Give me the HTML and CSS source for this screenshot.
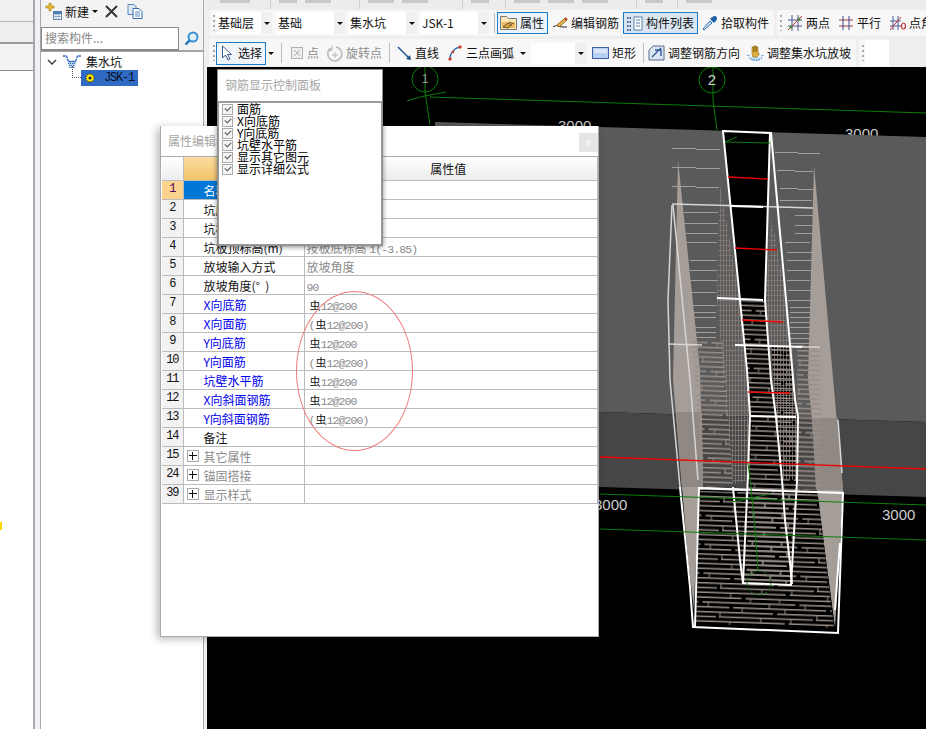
FILE: index.html
```html
<!DOCTYPE html>
<html lang="zh">
<head>
<meta charset="utf-8">
<title>集水坑</title>
<link rel="stylesheet" href="styles.css">
</head>
<body>
<div class="app">
  <aside class="leftcol">
    <div class="lc-top"></div>
    <div class="lc-btn"></div>
    <div class="lc-mid"></div>
    <div class="lc-list"></div>
  </aside>
  <div class="gutter"></div>
  <section class="tree">
    <div class="tree-bar">
      <svg class="ic" width="17" height="17" viewBox="0 0 17 17"><path d="M4 0h2v3h3v2H6v3H4V5H1V3h3z" fill="#f2c230" stroke="#9a7a10" stroke-width=".6"/><rect x="8.500" y="8.500" width="8" height="8" fill="#fff" stroke="#5f7fa8"/><path d="M8.500 11h8M8.500 13.500h8M11 11v5.500M13.700 11v5.500" stroke="#7f9cc0" stroke-width=".8"/><rect x="8.500" y="8.500" width="8" height="2.500" fill="#4f7fb8"/></svg>
      <span class="lbl">新建</span>
      <span class="arrow-sm"></span>
      <svg class="ic x-ic" width="13" height="13" viewBox="0 0 13 13"><path d="M1 1l11 11M12 1L1 12" stroke="#333" stroke-width="2"/></svg>
      <svg class="ic copy-ic" width="16" height="15" viewBox="0 0 16 15"><path d="M1 .5h6l2 2v8H1z" fill="#dfe9f5" stroke="#5d86b8"/><path d="M6 4.500h6l3 3v7H6z" fill="#fff" stroke="#2f6cb0"/><path d="M8 8h5M8 10h5M8 12h5" stroke="#2f6cb0" stroke-width=".8"/></svg>
    </div>
    <div class="search">
      <span class="search-in">搜索构件...</span>
      <span class="search-btn"><svg width="15" height="15" viewBox="0 0 15 15"><circle cx="9" cy="6" r="4.500" fill="#dff0fb" stroke="#3b8fd0" stroke-width="2"/><path d="M5.500 9.500L1.500 13.500" stroke="#2f7fc0" stroke-width="2.500"/></svg></span>
    </div>
    <div class="tree-body">
      <div class="node">
        <svg class="chev" width="10" height="6" viewBox="0 0 10 6"><path d="M1 1l4 4 4-4" fill="none" stroke="#444" stroke-width="1.500"/></svg>
        <svg class="pit-ic" width="18" height="14" viewBox="0 0 18 14"><path d="M4 6h10l-2.500 7h-5z" fill="#bcd4ee"/><path d="M0 1h3.500l2 5.500h7l2-5.500H18" fill="none" stroke="#1f5fb8" stroke-width="1.300" stroke-dasharray="2.500 .8"/><path d="M5 8.500h8M6 10.500h6M6.500 12.500h5" stroke="#1f5fb8" stroke-dasharray="1 1"/></svg>
        <span class="lbl">集水坑</span>
      </div>
      <div class="link"></div>
      <div class="node-sel">
        <svg width="10" height="10" viewBox="0 0 10 10"><circle cx="5" cy="5" r="4" fill="#ffec00" stroke="#111" stroke-dasharray="1.200 1"/><circle cx="5" cy="5" r="1.500" fill="#222"/></svg>
        <span>JSK-1</span>
      </div>
    </div>
  </section>
  <div class="gutter2"></div>

  <main class="main">
    <div class="strip">
      <span class="stub s1"></span><span class="tick t1"></span><span class="stub s2"></span><span class="stub s3"></span><span class="tick t2"></span><span class="stub s3"></span><span class="stub s3"></span><span class="tick t3"></span><span class="stub s2"></span><span class="tick t4"></span><span class="stub s3"></span><span class="stub s3 m"></span><span class="stub s3 m"></span><span class="tick t5"></span><span class="stub s2"></span><span class="tick t6"></span><span class="stub s3"></span>
    </div>

    <div class="row row1">
      <div class="seg seg1">
        <span class="grip"></span>
        <span class="sel ml1 w56"><span class="sel-text">基础层</span><span class="sel-btn"></span></span>
        <span class="sel ml4 w69"><span class="sel-text">基础</span><span class="sel-btn"></span></span>
        <span class="sel ml3 w69"><span class="sel-text">集水坑</span><span class="sel-btn"></span></span>
        <span class="sel ml3 w69"><span class="sel-text">JSK-1</span><span class="sel-btn"></span></span>
        <span class="sep ml5"></span>
        <span class="tool on ml2">
          <svg width="17" height="16" viewBox="0 0 17 16"><path d="M.5 1.500h6l2 2h8v11H.5z" fill="#fbe6b8" stroke="#777"/><path d="M2 7h13v6H2z" fill="#f4b860"/><path d="M3 12l5-4 4 2-4 3zM9 7l5 2" stroke="#6b5a30" fill="#d8a040"/></svg>
          <span>属性</span>
        </span>
        <span class="tool ml2">
          <svg width="16" height="14" viewBox="0 0 16 14"><path d="M1 11c2-1 3-2 5-1s5 1 9 1" fill="none" stroke="#222"/><path d="M5 9l8-7 2 2-8 7z" fill="#e8b440" stroke="#6b4a10" stroke-width=".7"/><path d="M13 2l2 2" stroke="#c03020" stroke-width="2"/></svg>
          <span>编辑钢筋</span>
        </span>
        <span class="tool on dark ml2">
          <svg width="17" height="15" viewBox="0 0 17 15"><g fill="none" stroke="#5b7fa8"><rect x="8" y="1" width="8" height="13" fill="#fff"/><path d="M10 4h4M10 7h4M10 10h4"/></g><path d="M1 2h4M1 6h4M1 10h4M1 14h4" stroke="#4a6a90" stroke-width="2" stroke-dasharray="1.500 1"/></svg>
          <span>构件列表</span>
        </span>
        <span class="tool ml2">
          <svg width="16" height="16" viewBox="0 0 16 16"><path d="M2 15l-1-1 7-8 2 2z" fill="#cfe4f5" stroke="#2f6fb0"/><path d="M8 4l4 4 2-2-4-4z" fill="#1f5fa8"/><circle cx="12.500" cy="3.500" r="2.500" fill="#1f5fa8"/></svg>
          <span>拾取构件</span>
        </span>
      </div>
      <div class="seg seg2">
        <span class="grip"></span>
        <span class="tool ml3">
          <svg width="16" height="16" viewBox="0 0 16 16"><path d="M0 5h14M0 11h14M4 0v16M10 0v16" stroke="#4a5a90" fill="none" transform="translate(1 0)"/><path d="M1 15L15 1" stroke="#c03030"/><circle cx="4" cy="12" r="1.600" fill="#4a8a30"/><circle cx="12" cy="4" r="1.600" fill="#4a8a30"/></svg>
          <span>两点</span>
        </span>
        <span class="tool ml6">
          <svg width="16" height="16" viewBox="0 0 16 16"><path d="M1 5h14M1 11h14" stroke="#a03838"/><path d="M5 1v14M11 1v14" stroke="#3a4a90"/></svg>
          <span>平行</span>
        </span>
        <span class="tool ml7">
          <svg width="16" height="16" viewBox="0 0 16 16"><path d="M0 6h11M0 11h11M3 1v14M8 1v14" stroke="#4a5a90" fill="none"/><path d="M0 15L11 2" stroke="#c03030"/><path d="M13.500 8a2 3 0 1 0 .01 0z" fill="none" stroke="#c03030" stroke-width="1.200"/></svg>
          <span>点角</span>
        </span>
      </div>
    </div>

    <div class="row row2">
      <div class="seg seg3">
        <span class="grip"></span>
        <span class="tool on pale ml1">
          <svg width="16" height="16" viewBox="0 0 16 16"><path d="M3.500 1v12l3-3 2.500 5 2-1-2.500-4.500h4z" fill="#fff" stroke="#3a5a80"/></svg>
          <span>选择</span>
        </span>
        <span class="arrow"></span>
        <span class="sep ml5"></span>
        <span class="tool ml6 dim">
          <svg width="14" height="14" viewBox="0 0 14 14"><rect x="1.500" y="1.500" width="11" height="11" fill="#eee" stroke="#b0b0b0"/><path d="M4 4l6 6M10 4l-6 6" stroke="#b0b0b0"/></svg>
          <span>点</span>
        </span>
        <span class="tool ml5 dim">
          <svg width="17" height="17" viewBox="0 0 17 17"><path d="M5 3a7 7 0 1 0 5-1" fill="none" stroke="#b8b8b8" stroke-width="1.500"/><path d="M6 .5v5H2" fill="none" stroke="#b8b8b8"/><path d="M6 10h6M9 7v6" stroke="#b8b8b8"/></svg>
          <span>旋转点</span>
        </span>
        <span class="sep ml7"></span>
        <span class="tool ml5">
          <svg width="15" height="15" viewBox="0 0 15 15"><path d="M1 1l12 12" stroke="#1f4f90" stroke-width="1.400"/><path d="M14 14l-5-1 4-4z" fill="#1f4f90"/></svg>
          <span>直线</span>
        </span>
        <span class="tool ml6">
          <svg width="16" height="16" viewBox="0 0 16 16"><path d="M3 14C3 8 7 3 13 2" fill="none" stroke="#2f6fb0" stroke-width="1.500"/><circle cx="3" cy="14" r="1.700" fill="#d04030"/><circle cx="13" cy="2" r="1.700" fill="#d04030"/><circle cx="6" cy="7" r="1.300" fill="#d04030"/></svg>
          <span>三点画弧</span>
        </span>
        <span class="arrow ml4"></span>
        <span class="sel ml3 w55 short"><span class="sel-text"></span><span class="sel-btn"></span></span>
        <span class="tool ml4">
          <svg width="17" height="13" viewBox="0 0 17 13"><rect x=".5" y=".5" width="16" height="11" fill="#b8cff0" stroke="#3a62a8"/><rect x="2" y="2" width="13" height="4" fill="#dbe7f8"/></svg>
          <span>矩形</span>
        </span>
        <span class="sep ml7"></span>
        <span class="tool ml2">
          <svg width="17" height="16" viewBox="0 0 17 16"><path d="M5 1h11v14H1V5z" fill="#dce6f2" stroke="#5a6f90"/><path d="M4 12L13 3M7 5h6v6" fill="none" stroke="#2f5a9a" stroke-width="1.400"/></svg>
          <span>调整钢筋方向</span>
        </span>
        <span class="tool ml5">
          <svg width="17" height="17" viewBox="0 0 17 17"><path d="M3 12h11l-2 4H5z" fill="#a9cdea" opacity=".7"/><path d="M5 9V2h1.500v5V1H8v6V1h1.500v6V2H11v7l1-1v2l-2 2H6z" fill="#e2b040" stroke="#7a5a10" stroke-width=".5"/><path d="M0 10l3 1M14 11l3-1M2 13c4 3 9 3 13 0" fill="none" stroke="#3f7fc0" stroke-dasharray="1.500 1"/></svg>
          <span>调整集水坑放坡</span>
        </span>
      </div>
      <div class="seg seg4">
        <span class="grip"></span>
        <span class="blank"></span>
      </div>
    </div>

    <div class="canvas">
      <svg class="scene" viewBox="207 67 719 662" width="719" height="662">
        <defs>
          <pattern id="rows" width="97" height="28.800" patternUnits="userSpaceOnUse" patternTransform="rotate(2)">
            <path d="M0 1h40M44 1h53M0 5.800h71M75 5.800h22M0 10.600h18M22 10.600h75M0 15.400h58M61 15.400h36M0 20.200h30M34 20.200h63M0 25h83M87 25h10"/>
            <path class="ticks" d="M14 1v4.800M62 10.600v4.800M36 15.400v4.800M84 5.800v4.800M24 25v3.800M50 1v4.800M6 15.400v4.800M72 20.200v4.800M92 25v3.800M30 5.800v4.800"/>
          </pattern>
          <pattern id="grid" width="3" height="5" patternUnits="userSpaceOnUse">
            <path d="M0 .5h3M.5 0v5"/>
          </pattern>
        </defs>

        <g class="g-grid">
          <circle cx="425" cy="79" r="13"/>
          <circle cx="712" cy="80" r="13"/>
          <path d="M425 67V92L430 125M407 101C420 96 432 95 446 92M430 97L926 113M713 67V100L717 130"/>
        </g>
        <text x="425" y="83" class="num1">1</text>
        <text x="712" y="85" class="num2">2</text>
        <text x="558" y="131" class="dim-t">3000</text>
        <text x="845" y="139" class="dim-t">3000</text>

        <polygon class="p-top" points="435,122 600,127 926,137 926,422 600,412 435,407"/>
        <polygon class="p-band" points="435,407 600,412 926,422 926,497 600,487 435,482"/>

        <polygon class="tan" points="678,160 700,370 703,480 696,627 688,560 682,487 673,380"/>
        <polygon class="tan" points="814,165 843,490 835,628 826,560 816,480 812,420 808,380"/>
        <polygon class="tan-d" points="676,412 702,412 703,480 703,487 682,487"/>
        <polygon class="tan-d" points="812,418 838,418 843,490 816,490"/>

        <path class="mesh" d="M672 148L720 150M672 167L720 169M672 186L719 188M683 212L718 213M683 223L718 224M685 233L718 234M686 242L717 243M690 260L717 261M690 270L717 271M690 280L717 281M690 292L716 293M692 305L716 306M692 312L716 313M692 317L716 318M692 327L716 328M692 332L716 333M692 337L716 338M775 152L820 154M777 170L813 172M780 188L815 190M780 200L812 201M795 215L813 216M795 225L812 226M795 233L812 234M785 242L810 243M787 252L812 253M787 260L812 261M787 270L812 271M787 280L810 281M788 290L812 291M788 300L812 301M790 307L810 308M790 312L810 313M790 317L810 318M790 322L811 323M790 327L812 328M790 333L812 334M790 338L812 339M790 343L812 344"/>

        <polygon class="black" points="723,131 771,133 765,300 771,380 776,417 782,480 792,583 743,583 748,475 750,415 747,370 740,300"/>
        <polygon class="black" points="771,345 790,345 795,400 798,416 797,480 791,585 782,480 776,417"/>
        <polygon class="black" points="699,490 817,493 826,560 835,630 693,627 696,560"/>

        <polygon class="f-grid" points="720,185 740,300 747,370 750,415 748,480 733,485 723,370 717,300"/>
        <polygon class="f-grid" points="772,220 787,300 794,385 798,416 797,480 782,480 776,417 771,345 765,300"/>
        <polygon class="f-rows" points="692,340 723,340 733,485 703,487"/>
        <polygon class="f-rows" points="797,345 820,345 822,490 798,490"/>
        <polygon class="f-rows" points="740,300 765,300 771,380 776,417 782,480 792,583 743,583 748,475 750,415 747,370"/>
        <polygon class="f-rows" points="700,491 818,494 826,560 834,628 696,624"/>
        <polygon class="f-rows" points="771,345 792,345 797,416 797,480 791,585 782,480 776,417"/>

        <g class="w-soft">
          <path d="M672 205L668 300L670 380L680 487"/>
          <path d="M673 205L690 380L698 480"/>
          <path d="M672 204L813 208"/>
          <path d="M668 344L702 345"/>
          <path d="M801 347L820 347"/>
          <path d="M842 473L838 420"/>
        </g>
        <g class="w-hard">
          <path d="M723 131L771 133L795 400L798 416L797 480L791 585L743 583L748 475L750 415L747 370L723 131Z"/>
          <path d="M770 133L768 200L765 300L771 380L776 417L782 480L785 520L790 563L792 584"/>
          <path d="M731 206L763 207M717 298L763 300M735 345L802 347M750 416L796 417"/>
          <path d="M680 487L690 587L693 627L838 633L843 493L699 488L695 627"/>
          <path d="M699 488L747 490M733 487L740 560L743 583"/>
          <path d="M840 543L835 610"/>
        </g>

        <g class="red">
          <path d="M600 457L926 469"/>
          <path d="M728 177L768 179M735 248L777 250M742 320L783 322M748 392L790 393"/>
        </g>
        <g class="g-grid">
          <path d="M600 494L926 505M600 529L926 540M748 463L752 497L755 530L758 570M732 502L770 494M725 142L737 137M725 142L770 143"/>
          <circle class="dash" cx="759" cy="583" r="12"/>
        </g>
        <text x="594" y="510" class="dim-t">3000</text>
        <text x="882" y="520" class="dim-t">3000</text>
      </svg>
    </div>
  </main>

  <div class="dialog">
    <div class="dlg-title">
      <span>属性编辑器</span>
      <span class="close">x</span>
    </div>
    <table class="props">
      <thead>
        <tr><th class="c-num"></th><th class="c-name">属性名称</th><th class="c-val">属性值</th></tr>
      </thead>
      <tbody>
        <tr class="sel-row"><td class="c-num">1</td><td class="c-name">名称</td><td>JSK-1</td></tr>
        <tr><td class="c-num">2</td><td class="c-name">坑底标高(m)</td><td class="v">-3.85</td></tr>
        <tr><td class="c-num">3</td><td class="c-name">坑板厚度(mm)</td><td class="v">500</td></tr>
        <tr><td class="c-num">4</td><td class="c-name">坑板顶标高(m)</td><td class="v">按板底标高 <span class="mono">1(-3.85)</span></td></tr>
        <tr><td class="c-num">5</td><td class="c-name">放坡输入方式</td><td class="v">放坡角度</td></tr>
        <tr><td class="c-num">6</td><td class="c-name">放坡角度(°&nbsp;&nbsp;)</td><td class="v"><span class="mono">90</span></td></tr>
        <tr class="link-row"><td class="c-num">7</td><td class="c-name">X向底筋</td><td class="v rb"><b>虫</b><span class="mono">12@200</span></td></tr>
        <tr class="link-row"><td class="c-num">8</td><td class="c-name">X向面筋</td><td class="v rb"><span class="mono">(</span><b>虫</b><span class="mono">12@200)</span></td></tr>
        <tr class="link-row"><td class="c-num">9</td><td class="c-name">Y向底筋</td><td class="v rb"><b>虫</b><span class="mono">12@200</span></td></tr>
        <tr class="link-row"><td class="c-num">10</td><td class="c-name">Y向面筋</td><td class="v rb"><span class="mono">(</span><b>虫</b><span class="mono">12@200)</span></td></tr>
        <tr class="link-row"><td class="c-num">11</td><td class="c-name">坑壁水平筋</td><td class="v rb"><b>虫</b><span class="mono">12@200</span></td></tr>
        <tr class="link-row"><td class="c-num">12</td><td class="c-name">X向斜面钢筋</td><td class="v rb"><b>虫</b><span class="mono">12@200</span></td></tr>
        <tr class="link-row"><td class="c-num">13</td><td class="c-name">Y向斜面钢筋</td><td class="v rb"><span class="mono">(</span><b>虫</b><span class="mono">12@200)</span></td></tr>
        <tr><td class="c-num">14</td><td class="c-name">备注</td><td></td></tr>
        <tr class="grp"><td class="c-num">15</td><td class="c-name"><i class="plus"></i>其它属性</td><td></td></tr>
        <tr class="grp"><td class="c-num">24</td><td class="c-name"><i class="plus"></i>锚固搭接</td><td></td></tr>
        <tr class="grp"><td class="c-num">39</td><td class="c-name"><i class="plus"></i>显示样式</td><td></td></tr>
      </tbody>
    </table>
  </div>

  <div class="panel">
    <div class="panel-title">钢筋显示控制面板</div>
    <ul class="checks">
      <li><i class="cb"></i>面筋</li>
      <li><i class="cb"></i>X向底筋</li>
      <li><i class="cb"></i>Y向底筋</li>
      <li><i class="cb"></i>坑壁水平筋</li>
      <li><i class="cb"></i>显示其它图元</li>
      <li><i class="cb"></i>显示详细公式</li>
    </ul>
  </div>

  <div class="ellipse"></div>
</div>
</body>
</html>
```

FILE: styles.css
```css
* { box-sizing: border-box; }
html, body { margin: 0; padding: 0; }
body {
  width: 926px; height: 729px; overflow: hidden; background: #f0f0f0; color: #111;
  font: 12px/16px "Noto Sans CJK SC", "Liberation Sans", sans-serif;
}
.app { position: relative; display: flex; width: 926px; height: 729px; overflow: hidden; }

/* left column */
.leftcol { width: 35px; display: flex; flex-direction: column; border-right: 2px solid #a9a9ad; background: #fff; }
.lc-top { height: 22px; background: #f0f0f0; border-bottom: 1px solid #b4b4b4; }
.lc-btn { height: 22px; background: #eeeeee; border-bottom: 2px solid #9a9a9a; }
.lc-mid { height: 27px; background: #f3f3f3; border-bottom: 1px solid #8c8c8c; }
.lc-list { flex: 1; background: #fff; }
.lc-list::before { content: ""; display: block; width: 2px; height: 8px; margin-top: 451px; background: #ffd800; }
.gutter { width: 5px; background: #f1f1f4; }

/* tree */
.tree { width: 164px; display: flex; flex-direction: column; border-left: 1px solid #a9a9ad; border-right: 1px solid #a9a9ad; }
.tree-bar { height: 27px; display: flex; align-items: center; padding: 0 0 4px 4px; background: #f3f3f3; }
.tree-bar .ic { flex: none; }
.lbl { margin-left: 3px; }
.arrow-sm { width: 0; height: 0; margin: 0 0 0 3px; border: 3px solid transparent; border-top: 3px solid #111; border-bottom: 0; }
.x-ic { margin-left: 7px; }
.copy-ic { margin-left: 9px; }
.search { height: 25px; display: flex; background: #f3f3f3; border-bottom: 2px solid #a5a5a5; }
.search-in { width: 138px; height: 24px; padding: 2px 0 0 3px; background: #fff; border: 1px solid #8a8a8a; border-bottom-width: 2px; color: #888; }
.search-btn { flex: 1; display: flex; align-items: center; justify-content: center; }
.tree-body { position: relative; flex: 1; background: #fff; }
.node { display: flex; align-items: center; height: 18px; padding: 1px 0 0 6px; }
.chev { flex: none; }
.pit-ic { margin-left: 6px; flex: none; }
.node .lbl { margin-left: 5px; }
.link { position: absolute; left: 31px; top: 14px; width: 9px; height: 12px; border-left: 1px dotted #555; border-bottom: 1px dotted #555; }
.node-sel { display: flex; align-items: center; width: 57px; height: 16px; margin-left: 40px; padding-left: 4px; background: #2f6bc2; color: #0a0f24; font-family: "Liberation Mono", monospace; letter-spacing: -1.200px; }
.node-sel span { margin-left: 9px; }
.gutter2 { width: 3px; background: #f0f0f0; }

/* main */
.main { flex: 1; min-width: 0; display: flex; flex-direction: column; background: #eeeeee; }
.strip { height: 10px; display: flex; align-items: flex-start; padding-left: 13px; gap: 8px; overflow: hidden; background: #ececec; }
.stub { height: 3px; background: #c9c9c9; }
.s1 { width: 30px; }
.s2 { width: 18px; }
.s3 { width: 26px; }
.tick { width: 1px; height: 9px; background: #cfcfcf; }
.t1 { margin-left: 12px; }
.t2 { margin-left: 20px; }
.t3 { margin-left: 26px; }
.t4 { margin-left: 8px; }
.t5 { margin-left: 20px; }
.t6 { margin-left: 6px; }

.row { display: flex; flex: none; }
.row1 { height: 26px; margin-left: 3px; }
.row2 { height: 28px; margin: 3px 0 0 2px; }
.seg { display: flex; align-items: center; flex: none; background: #f7f7f7; border-radius: 3px 3px 0 0; padding-left: 3px; }
.seg1 { width: 564px; }
.seg2 { width: 152px; margin-left: 3px; overflow: hidden; }
.seg3 { width: 647px; padding-left: 4px; }
.seg4 { width: 30px; margin-left: 3px; }
.grip { flex: none; width: 2px; height: 16px; background: repeating-linear-gradient(#a8a8a8 0 2px, transparent 2px 5px); }
.sep { flex: none; width: 1px; height: 20px; background: #bdbdbd; }
.blank { flex: none; width: 24px; height: 26px; margin-left: 1px; background: #fff; }

.sel { display: flex; flex: none; height: 22px; background: #fff; }
.sel.short { height: 21px; }
.sel-text { flex: 1; min-width: 0; padding: 3px 0 0 2px; }
.sel-btn { display: flex; align-items: center; justify-content: center; width: 11px; background: #f0f0f0; }
.sel-btn::after, .arrow::after { content: ""; width: 0; height: 0; border: 3px solid transparent; border-top: 3px solid #111; border-bottom: 0; }
.w56 { width: 56px; }
.w69 { width: 69px; }
.w55 { width: 55px; }
.arrow { display: flex; flex: none; align-items: center; justify-content: center; width: 10px; height: 20px; }

.ml1 { margin-left: 1px; }
.ml2 { margin-left: 2px; }
.ml3 { margin-left: 3px; }
.ml4 { margin-left: 4px; }
.ml5 { margin-left: 5px; }
.ml6 { margin-left: 6px; }
.ml7 { margin-left: 7px; }

.tool { display: flex; flex: none; align-items: center; gap: 3px; height: 22px; padding: 0 2px; white-space: nowrap; }
.seg2 .tool, .seg3 .tool:not(.on) { padding-right: 0; }
.tool svg { flex: none; }
.tool.on { border: 1px solid #1b7ccc; background: #eaf3fb; padding: 0 3px 0 2px; }
.tool.dark { background: #d9e6f2; }
.tool.pale { height: 23px; background: #f0f5fb; }
.tool.dim { color: #8c8c8c; }

/* canvas */
.canvas { flex: 1; min-height: 0; background: #000; overflow: hidden; }
.scene { display: block; }
.g-grid { fill: none; stroke: #0b7d0b; stroke-width: 1; }
.dash { stroke-dasharray: 3 2; }
.num1, .num2 { font: 12px "Liberation Sans", sans-serif; fill: #9a9a9a; text-anchor: middle; }
.num2 { font-size: 15px; fill: #cfcfcf; }
.dim-t { font: 15px "Liberation Sans", sans-serif; fill: #cfcfcf; }
.p-top { fill: #5a5a5a; }
.p-band { fill: #464646; }
.tan { fill: #a59d98; }
.tan-d { fill: #8f8883; }
.mesh { fill: none; stroke: #a59d98; stroke-width: 1; shape-rendering: crispEdges; }
.black { fill: #000; }
#rows path { fill: none; stroke: #9a8f88; stroke-width: 1.500; }
#rows .ticks { stroke-width: 1; }
#grid path { fill: none; stroke: #857c78; stroke-width: .8; shape-rendering: crispEdges; }
.f-grid { fill: url(#grid); }
.f-rows { fill: url(#rows); }
.w-soft { fill: none; stroke: #d6d6d6; stroke-width: 1.500; }
.w-hard { fill: none; stroke: #fff; stroke-width: 2; }
.red { fill: none; stroke: #f00000; stroke-width: 1.300; }

/* property dialog */
.dialog { position: absolute; left: 160px; top: 126px; width: 439px; height: 511px; background: #fff; border: 1px solid #aaaaaa; border-top: 0; box-shadow: -3px 2px 8px rgba(0, 0, 0, .28); }
.dlg-title { position: relative; height: 31px; padding: 7px 0 0 7px; color: #a6a6a6; border-bottom: 1px solid #aaaaaa; }
.close { position: absolute; left: 418px; top: 7px; width: 19px; height: 19px; background: #e5e5e5; color: #fff; text-align: center; font: 11px/19px "Liberation Sans", sans-serif; }
.props { width: 436px; margin-left: 1px; border-collapse: collapse; table-layout: fixed; }
.props th { height: 23px; font-weight: 400; border-right: 1px solid #bbb; border-bottom: 1px solid #bbb; padding: 1px 0 0; background: linear-gradient(#fff, #ececec); }
.props th.c-name { width: 121px; background: linear-gradient(#fbdc9f, #f0c26a); }
.props th.c-num { width: 21px; background: linear-gradient(#fff, #ededed); }
.props th.c-val { padding-right: 5px; }
.props td { height: 19px; padding: 2px 0 0 2px; line-height: 16px; border-right: 1px solid #bbb; border-bottom: 1px solid #bbb; white-space: nowrap; overflow: hidden; }
.props td.c-num { padding: 0; text-align: center; background: #f2f2f2; font: 12px/17px "Liberation Mono", monospace; letter-spacing: -1.200px; }
.props td.c-name { padding-left: 20px; }
.sel-row td.c-num { background: #fbd38c; color: #4b0060; }
.sel-row td.c-name { background: #0078d7; color: #fff; }
.v { color: #8a8a8a; }
.mono { font: 11.500px/0 "Liberation Mono", monospace; letter-spacing: -.9px; }
.rb { padding-left: 4px !important; }
.rb b { font-weight: 400; line-height: 0; color: #111; font-size: 11px; margin-left: 1px; }
.link-row .c-name { color: #0000f0; }
.grp .c-name { position: relative; color: #8a8a8a; }
.plus { position: absolute; left: 3px; top: 3px; width: 12px; height: 12px; border: 1px solid #aaa; background: linear-gradient(#111, #111) center / 8px 1px no-repeat, linear-gradient(#111, #111) center / 1px 8px no-repeat, #fff; }

/* rebar panel */
.panel { position: absolute; left: 217px; top: 69px; width: 166px; height: 177px; background: #fff; border: 1px solid #8f8f8f; box-shadow: 0 1px 5px rgba(0, 0, 0, .45); }
.panel-title { height: 31px; padding: 7px 0 0 7px; color: #a6a6a6; }
.checks { list-style: none; margin: 0; padding: 0 0 0 3px; height: 144px; border: 1px solid #9a9a9a; border-top-width: 2px; }
.checks li { display: flex; align-items: center; height: 12px; line-height: 12px; color: #000; white-space: nowrap; }
.cb { position: relative; flex: none; width: 11px; height: 11px; margin-right: 4px; border: 1px solid #ababab; background: #f4f4f4; }
.cb::after { content: ""; position: absolute; left: 2px; top: 1px; width: 5px; height: 3px; border-left: 1.500px solid #555; border-bottom: 1.500px solid #555; transform: rotate(-45deg); }

.ellipse { position: absolute; left: 296px; top: 291px; width: 117px; height: 160px; border: 1px solid #f07a7a; border-radius: 50%; }
```
